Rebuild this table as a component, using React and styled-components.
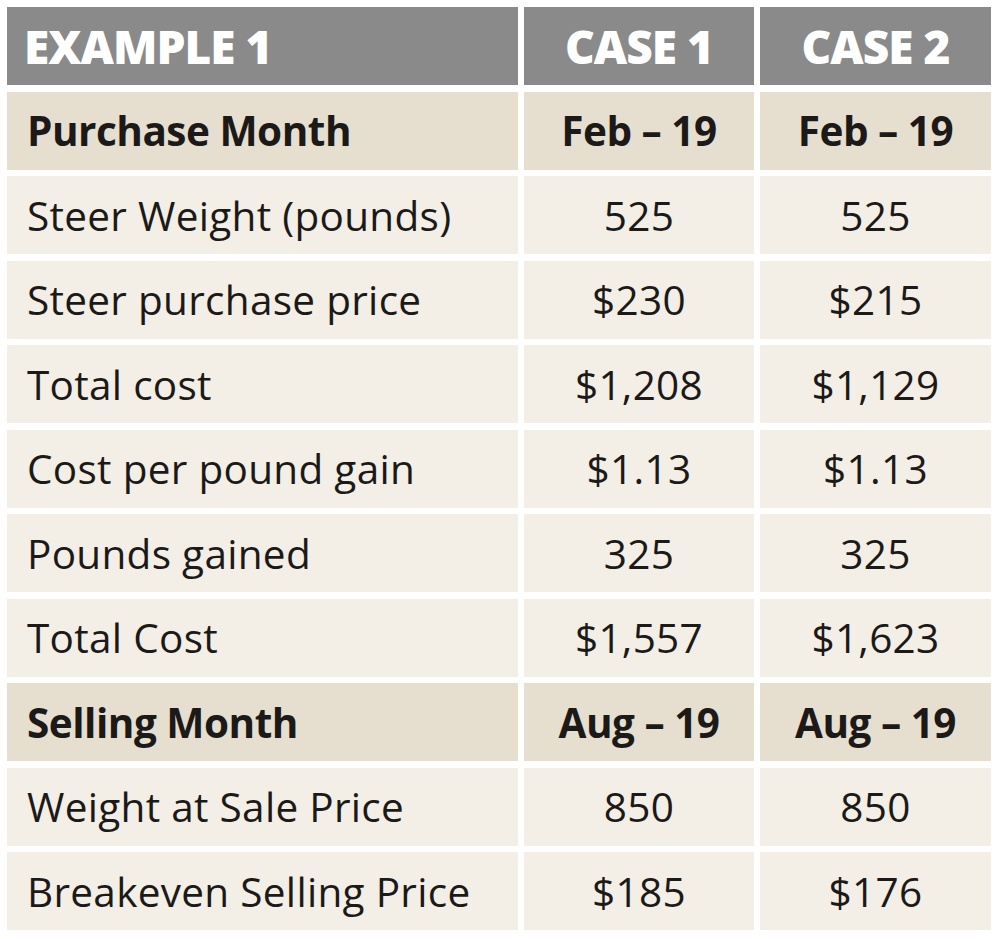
import React from "react";
import styled, { createGlobalStyle } from "styled-components";

const GlobalStyle = createGlobalStyle`
  body {
    margin: 0;
    background: #ffffff;
    font-family: "Open Sans", Lato, sans-serif;
    color: #1c1a19;
  }
`;

const rows = [
  { label: "Purchase Month", a: "Feb – 19", b: "Feb – 19", section: true },
  { label: "Steer Weight (pounds)", a: "525", b: "525" },
  { label: "Steer purchase price", a: "$230", b: "$215" },
  { label: "Total cost", a: "$1,208", b: "$1,129" },
  { label: "Cost per pound gain", a: "$1.13", b: "$1.13" },
  { label: "Pounds gained", a: "325", b: "325" },
  { label: "Total Cost", a: "$1,557", b: "$1,623" },
  { label: "Selling Month", a: "Aug – 19", b: "Aug – 19", section: true },
  { label: "Weight at Sale Price", a: "850", b: "850" },
  { label: "Breakeven Selling Price", a: "$185", b: "$176" },
];

const Table = styled.div`
  display: grid;
  grid-template-columns: 511px 230px 231px;
  grid-auto-rows: 78px;
  column-gap: 6px;
  row-gap: 6.5px;
  padding: 7px 0 0 7px;
`;

const Cell = styled.div`
  display: flex;
  align-items: center;
  justify-content: ${(p) => (p.$center ? "center" : "flex-start")};
  padding-left: ${(p) => (p.$center ? "0" : "20px")};
  background: ${(p) => (p.$section ? "#e6dfcf" : "#f3efe6")};
  font-size: 40.5px;
  font-weight: ${(p) => (p.$section ? 700 : 400)};
  letter-spacing: ${(p) => (p.$section ? "-0.5px" : "0.3px")};
  color: #1c1a19;
  white-space: nowrap;
`;

const HeadCell = styled.div`
  display: flex;
  align-items: center;
  justify-content: ${(p) => (p.$center ? "center" : "flex-start")};
  padding-left: ${(p) => (p.$center ? "0" : "17px")};
  background: #8a8a8a;
  color: #ffffff;
  font-size: 46px;
  font-weight: 800;
  letter-spacing: -1px;
  white-space: nowrap;
`;

export default function App() {
  return (
    <>
      <GlobalStyle />
      <Table>
        <HeadCell>EXAMPLE 1</HeadCell>
        <HeadCell $center>CASE 1</HeadCell>
        <HeadCell $center>CASE 2</HeadCell>
        {rows.map((r) => (
          <React.Fragment key={r.label}>
            <Cell $section={r.section}>{r.label}</Cell>
            <Cell $section={r.section} $center>{r.a}</Cell>
            <Cell $section={r.section} $center>{r.b}</Cell>
          </React.Fragment>
        ))}
      </Table>
    </>
  );
}
